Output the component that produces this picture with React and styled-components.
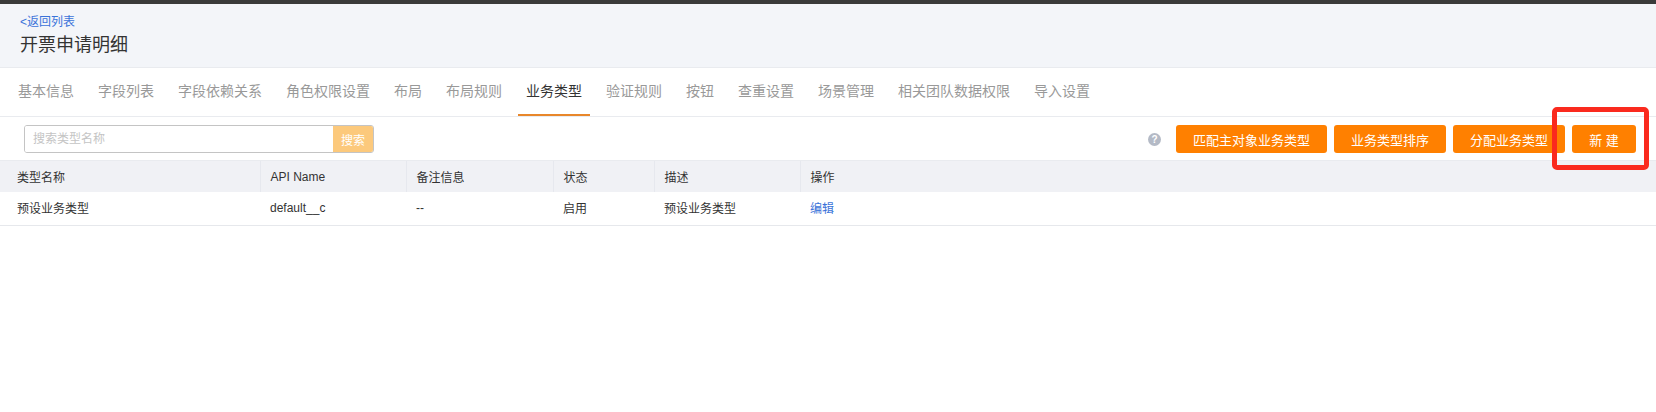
import React from 'react';
import styled, { createGlobalStyle } from 'styled-components';

const FONT = '"Liberation Sans", "Noto Sans CJK SC", sans-serif';

const GlobalStyle = createGlobalStyle`
  html, body {
    margin: 0;
    padding: 0;
    background: #fff;
    font-family: ${FONT};
    color: #333;
  }
  * { box-sizing: border-box; }
`;

const Page = styled.div`
  position: relative;
  width: 1656px;
  height: 412px;
  overflow: hidden;
  border-top: 4px solid #3a3a3a;
`;

const Header = styled.header`
  height: 64px;
  padding: 10px 20px 0;
  background: #f3f5f9;
  border-bottom: 1px solid #e9ebef;
`;

const BackLink = styled.a`
  display: block;
  font-size: 12px;
  line-height: 16px;
  color: #3b73d9;
`;

const Title = styled.h1`
  margin: 2px 0 0;
  font-size: 18px;
  line-height: 26px;
  font-weight: 400;
  color: #333;
`;

const Tabs = styled.nav`
  display: flex;
  gap: 8px;
  height: 49px;
  padding-left: 10px;
  border-bottom: 1px solid #e9ebef;
`;

const Tab = styled.a`
  height: 48px;
  padding: 0 8px;
  font-size: 14px;
  line-height: 46px;
  color: ${p => (p.$active ? '#333' : '#999')};
  border-bottom: 2px solid ${p => (p.$active ? '#e8872b' : 'transparent')};
`;

const Toolbar = styled.div`
  display: flex;
  align-items: center;
  justify-content: space-between;
  height: 44px;
  padding: 1px 20px 0 24px;
  border-bottom: 1px solid #e9ebef;
`;

const SearchBox = styled.div`
  display: flex;
  width: 350px;
  height: 28px;
  border: 1px solid #c4c4c4;
  border-radius: 3px;
  overflow: hidden;
`;

const SearchInput = styled.input`
  flex: 1;
  min-width: 0;
  border: 0;
  outline: 0;
  padding: 0 8px;
  font: 12px ${FONT};
  &::placeholder { color: #c4c4c4; opacity: 1; }
`;

const SearchButton = styled.button`
  width: 40px;
  border: 0;
  padding: 0;
  background: #fcc97c;
  color: #fff;
  font: 12px ${FONT};
`;

const Actions = styled.div`
  display: flex;
  align-items: center;
  gap: 7px;
`;

const Help = styled.span`
  width: 13px;
  height: 13px;
  margin-right: 8px;
  border-radius: 50%;
  background: #b4bac6;
  color: #fff;
  font-size: 10px;
  font-weight: 700;
  line-height: 13px;
  text-align: center;
`;

const OrangeButton = styled.button`
  height: 28px;
  width: ${p => p.$width}px;
  border: 0;
  border-radius: 3px;
  padding: 0;
  background: #ff8000;
  color: #fff;
  font: 13px ${FONT};
`;

const Table = styled.table`
  width: 100%;
  border-collapse: collapse;
  table-layout: fixed;
  font-size: 12px;
  color: #333;
`;

const HeadCell = styled.th`
  height: 31px;
  padding: 0 9px 0 10px;
  background: #f0f1f5;
  border-right: 1px solid #e6e8ee;
  font-weight: 400;
  text-align: left;
  &:first-child { padding-left: 17px; }
  &:last-child { border-right: 0; }
`;

const Cell = styled.td`
  height: 33px;
  padding: 0 9px 1px 10px;
  border-bottom: 1px solid #e6e8ec;
  &:first-child { padding-left: 17px; }
`;

const EditLink = styled.a`
  color: #3b73d9;
`;

// red annotation drawn over the screenshot
const Highlight = styled.div`
  position: absolute;
  left: 1552px;
  top: 103px;
  width: 97px;
  height: 63px;
  border: 5px solid #fa2a1e;
  border-radius: 5px;
`;

const tabs = ['基本信息', '字段列表', '字段依赖关系', '角色权限设置', '布局', '布局规则', '业务类型', '验证规则', '按钮', '查重设置', '场景管理', '相关团队数据权限', '导入设置'];
const columns = [
  { label: '类型名称', width: 260, value: '预设业务类型' },
  { label: 'API Name', width: 146, value: 'default__c' },
  { label: '备注信息', width: 147, value: '--' },
  { label: '状态', width: 101, value: '启用' },
  { label: '描述', width: 146, value: '预设业务类型' },
  { label: '操作', value: <EditLink>编辑</EditLink> },
];

export default function App() {
  return (
    <Page>
      <GlobalStyle />
      <Header>
        <BackLink>&lt;返回列表</BackLink>
        <Title>开票申请明细</Title>
      </Header>
      <Tabs>
        {tabs.map(t => (
          <Tab key={t} $active={t === '业务类型'}>{t}</Tab>
        ))}
      </Tabs>
      <Toolbar>
        <SearchBox>
          <SearchInput placeholder="搜索类型名称" />
          <SearchButton>搜索</SearchButton>
        </SearchBox>
        <Actions>
          <Help>?</Help>
          <OrangeButton $width={151}>匹配主对象业务类型</OrangeButton>
          <OrangeButton $width={112}>业务类型排序</OrangeButton>
          <OrangeButton $width={112}>分配业务类型</OrangeButton>
          <OrangeButton $width={64}>新 建</OrangeButton>
        </Actions>
      </Toolbar>
      <Table>
        <colgroup>
          {columns.map(c => (
            <col key={c.label} width={c.width} />
          ))}
        </colgroup>
        <thead>
          <tr>
            {columns.map(c => (
              <HeadCell key={c.label}>{c.label}</HeadCell>
            ))}
          </tr>
        </thead>
        <tbody>
          <tr>
            {columns.map(c => (
              <Cell key={c.label}>{c.value}</Cell>
            ))}
          </tr>
        </tbody>
      </Table>
      <Highlight />
    </Page>
  );
}
